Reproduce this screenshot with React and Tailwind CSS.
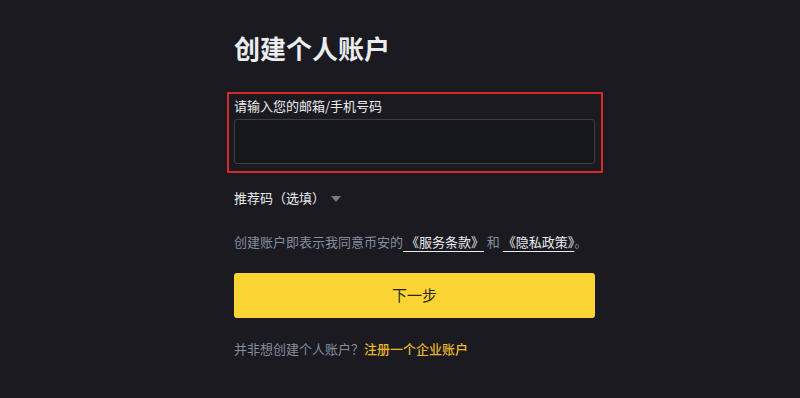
import React from 'react'

const font = { fontFamily: '"Noto Sans CJK SC", "Noto Sans", sans-serif' }

export default function App() {
  return (
    <div className="w-[800px] h-[398px] bg-[#1b1a20] overflow-hidden" style={font}>
      <div className="pl-[234px] pt-[30px] w-[600px]">
        <h1 className="text-[26px] leading-[36px] font-bold text-[#eaecef]">创建个人账户</h1>

        {/* highlighted field */}
        <div className="-ml-[7px] mt-[26px] w-[376px] h-[81px] border-2 border-[#d42a2a] pl-[5px] pt-[3px]">
          <div className="text-[13px] leading-[18px] text-[#eaecef]">请输入您的邮箱/手机号码</div>
          <input
            type="text"
            className="mt-[4px] block w-[361px] h-[45px] rounded-[3px] border border-[#3b3f47] bg-[#16171c] outline-none"
          />
        </div>

        <div className="mt-[15px] flex items-center text-[13px] leading-[20px] text-[#eaecef]">
          <span>推荐码（选填）</span>
          <span className="ml-[6px] mt-[1px] w-0 h-0 border-l-[5px] border-r-[5px] border-t-[6px] border-l-transparent border-r-transparent border-t-[#707a8a]" />
        </div>

        <div className="mt-[24px] text-[13px] leading-[20px] text-[#848e9c] whitespace-nowrap">
          创建账户即表示我同意币安的
          <a className="text-[#eaecef] underline underline-offset-[4px]"> 《服务条款》</a>
          {' '}和{' '}
          <a className="text-[#eaecef] underline underline-offset-[4px]">《隐私政策》</a>
          。
        </div>

        <button className="mt-[21px] w-[361px] h-[45px] rounded-[3px] bg-[#fcd535] text-[15px] text-[#2b2412]">
          下一步
        </button>

        <div className="mt-[21px] text-[13px] leading-[20px] text-[#848e9c]">
          并非想创建个人账户？<a className="text-[#e7b72d] font-medium">注册一个企业账户</a>
        </div>
      </div>
    </div>
  )
}
